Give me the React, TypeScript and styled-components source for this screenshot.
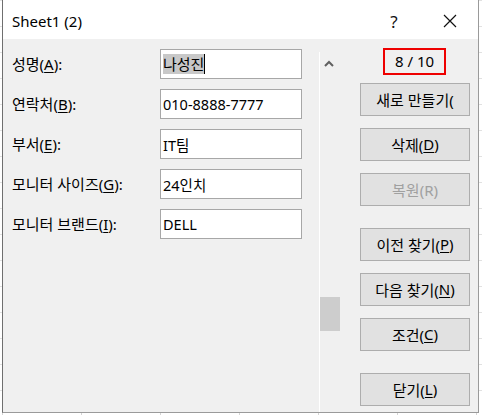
import React, { FC } from 'react'
import styled, { createGlobalStyle } from 'styled-components'

const GlobalStyle = createGlobalStyle`
    html, body {
        margin: 0;
        padding: 0;
        background: #ffffff;
    }
    * {
        box-sizing: border-box;
    }
`

const FONT = `"Noto Sans", "Noto Sans CJK KR", sans-serif`

const Screen = styled.div`
    width: 482px;
    height: 415px;
    overflow: hidden;
    background-color: #ffffff;
    background-image:
        linear-gradient(to right, #d4d4d4 1px, transparent 1px),
        linear-gradient(to bottom, #e1e1e1 1px, transparent 1px);
    background-size: 79px 100%, 100% 26px;
    background-position: 2px 0, 0 26px;
    padding-left: 2px;
    font-family: ${FONT};
    color: #000;
`

const Dialog = styled.div`
    width: 477px;
    height: 413px;
    display: flex;
    flex-direction: column;
    border-left: 1px solid #6f6f6f;
    border-right: 1px solid #9a9a9a;
    border-bottom: 1px solid #9a9a9a;
    background: #f0f0f0;
`

const TitleBar = styled.div`
    height: 39px;
    flex-shrink: 0;
    background: #ffffff;
    display: flex;
    align-items: center;
    padding-left: 9px;
    padding-top: 3px;
`

const Title = styled.div`
    flex: 1;
    font-size: 15px;
    color: #000;
`

const TitleButton = styled.div<{ $w: number }>`
    width: ${(p) => p.$w}px;
    display: flex;
    justify-content: center;
    align-items: center;
    font-size: 17px;
    color: #111;
`

const Body = styled.div`
    flex: 1;
    display: flex;
`

const FormPane = styled.div`
    width: 316px;
    padding: 10px 0 0 9px;
    display: grid;
    grid-template-columns: 148px 142px;
    grid-auto-rows: 30px;
    row-gap: 10px;
    align-content: start;
`

const Label = styled.div`
    display: flex;
    align-items: center;
    font-size: 15px;
    white-space: nowrap;
    padding-bottom: 1px;
`

const Key = styled.span`
    text-decoration: underline;
    text-underline-offset: 2px;
    text-decoration-thickness: 1px;
`

const Field = styled.div`
    border: 1px solid #a7a7a7;
    background: #ffffff;
    display: flex;
    align-items: center;
    padding-left: 2px;
    font-size: 14.5px;
    white-space: nowrap;
`

const Selected = styled.span`
    background: #c8c8c8;
    border-right: 1px solid #000;
    line-height: 20px;
    font-size: 15px;
`

const ScrollTrack = styled.div`
    width: 21px;
    margin-top: 13px;
    border-left: 1px solid #ffffff;
    display: flex;
    flex-direction: column;
    align-items: stretch;
`

const ScrollArrow = styled.div`
    height: 22px;
    display: flex;
    justify-content: center;
    align-items: center;
    padding-right: 2px;
`

const Thumb = styled.div`
    height: 34px;
    margin-top: 223px;
    background: #cdcdcd;
`

const ButtonPane = styled.div`
    flex: 1;
    padding: 9px 0 0 20px;
    display: flex;
    flex-direction: column;
`

const Counter = styled.div`
    width: 63px;
    height: 27px;
    align-self: flex-start;
    margin-left: 23px;
    border: 2px solid #ee0000;
    display: flex;
    justify-content: center;
    align-items: center;
    font-size: 15px;
    padding-bottom: 1px;
`

const Button = styled.div<{ $gap: number; $disabled?: boolean }>`
    width: 110px;
    height: 33px;
    margin-top: ${(p) => p.$gap}px;
    border: 1px solid #adadad;
    background: #e1e1e1;
    display: flex;
    justify-content: center;
    align-items: center;
    font-size: 15px;
    white-space: nowrap;
    overflow: hidden;
    padding-bottom: 1px;
    color: ${(p) => (p.$disabled ? '#a0a0a0' : '#000')};
`

const rows: { label: React.ReactNode; value: React.ReactNode }[] = [
    { label: <>성명(<Key>A</Key>):</>, value: <Selected>나성진</Selected> },
    { label: <>연락처(<Key>B</Key>):</>, value: '010-8888-7777' },
    { label: <>부서(<Key>E</Key>):</>, value: 'IT팀' },
    { label: <>모니터 사이즈(<Key>G</Key>):</>, value: '24인치' },
    { label: <>모니터 브랜드(<Key>I</Key>):</>, value: 'DELL' },
]

const App: FC = () => {
    return (
        <Screen>
            <GlobalStyle />
            <Dialog>
                <TitleBar>
                    <Title>Sheet1 (2)</Title>
                    <TitleButton $w={56}>?</TitleButton>
                    <TitleButton $w={56}>
                        <svg width="14" height="14" viewBox="0 0 14 14">
                            <path d="M1 1 L13 13 M13 1 L1 13" stroke="#111" strokeWidth="1.2" fill="none" />
                        </svg>
                    </TitleButton>
                </TitleBar>
                <Body>
                    <FormPane>
                        {rows.map((r, i) => (
                            <React.Fragment key={i}>
                                <Label>{r.label}</Label>
                                <Field>{r.value}</Field>
                            </React.Fragment>
                        ))}
                    </FormPane>
                    <ScrollTrack>
                        <ScrollArrow>
                            <svg width="10" height="7" viewBox="0 0 10 7">
                                <path d="M1 6 L5 2 L9 6" stroke="#606060" strokeWidth="2" fill="none" />
                            </svg>
                        </ScrollArrow>
                        <Thumb />
                    </ScrollTrack>
                    <ButtonPane>
                        <Counter>8 / 10</Counter>
                        <Button $gap={8}>새로 만들기(</Button>
                        <Button $gap={12}>삭제(<Key>D</Key>)</Button>
                        <Button $gap={12} $disabled>복원(R)</Button>
                        <Button $gap={22}>이전 찾기(<Key>P</Key>)</Button>
                        <Button $gap={12}>다음 찾기(<Key>N</Key>)</Button>
                        <Button $gap={12}>조건(<Key>C</Key>)</Button>
                        <Button $gap={22}>닫기(<Key>L</Key>)</Button>
                    </ButtonPane>
                </Body>
            </Dialog>
        </Screen>
    )
}

export default App
